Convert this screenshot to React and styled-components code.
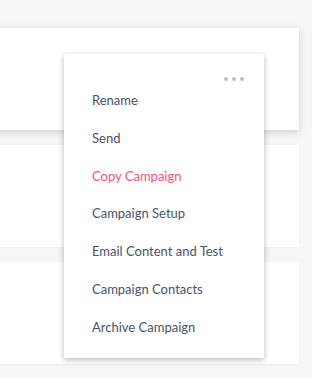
import React from 'react'
import styled, { createGlobalStyle } from 'styled-components'

const items = [
  { label: 'Rename' },
  { label: 'Send' },
  { label: 'Copy Campaign', active: true },
  { label: 'Campaign Setup' },
  { label: 'Email Content and Test' },
  { label: 'Campaign Contacts' },
  { label: 'Archive Campaign' },
]

const App = () => {
  return (
    <>
      <GlobalStyle />
      <Page>
        <CardList>
          <Card $raised />
          <Card />
          <Card />
          <Card />
        </CardList>
        <Menu>
          <DotsRow>
            <Dot />
            <Dot />
            <Dot />
          </DotsRow>
          <ItemList>
            {items.map((item) => (
              <Item key={item.label} $active={item.active}>
                {item.label}
              </Item>
            ))}
          </ItemList>
        </Menu>
      </Page>
    </>
  )
}

export default App

const GlobalStyle = createGlobalStyle`
  html, body {
    margin: 0;
    padding: 0;
    background: #f5f6f8;
    font-family: Lato, "Open Sans", sans-serif;
  }
`

const Page = styled.div`
  position: relative;
  width: 312px;
  height: 378px;
  overflow: hidden;
  background: #f5f6f8;
`

const CardList = styled.div`
  display: flex;
  flex-direction: column;
  gap: 15px;
  padding: 28px 13px 0 0;
  margin-left: -20px;
`

const Card = styled.div`
  height: 102px;
  background: #ffffff;
  box-shadow: ${(props) =>
    props.$raised
      ? '0 2px 8px rgba(0, 0, 0, 0.16)'
      : '0 1px 2px rgba(0, 0, 0, 0.03)'};
`

const Menu = styled.div`
  position: absolute;
  top: 54px;
  left: 64px;
  width: 200px;
  height: 304px;
  box-sizing: border-box;
  padding: 23px 0 10px;
  background: #ffffff;
  box-shadow: 0 2px 6px rgba(0, 0, 0, 0.28);
`

const DotsRow = styled.div`
  display: flex;
  justify-content: flex-end;
  gap: 4px;
  height: 4px;
  margin-bottom: 1px;
  padding-right: 20px;
`

const Dot = styled.span`
  width: 4px;
  height: 4px;
  border-radius: 50%;
  background: #b6bdca;
`

const ItemList = styled.ul`
  list-style: none;
  margin: 0;
  padding: 0;
`

const Item = styled.li`
  height: 37.8px;
  line-height: 37.8px;
  padding-left: 28px;
  font-size: 13px;
  color: ${(props) => (props.$active ? '#f4547c' : '#4a5366')};
  cursor: pointer;
`
